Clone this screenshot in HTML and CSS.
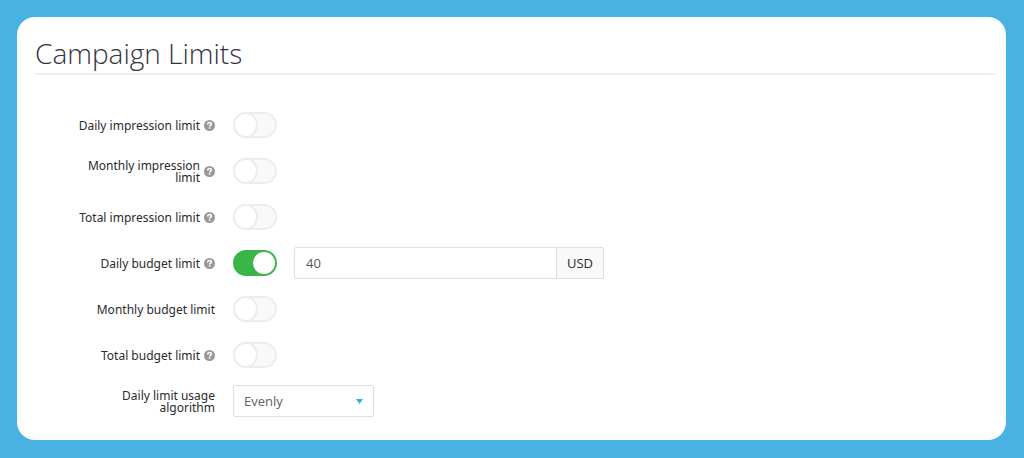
FILE: index.html
```html
<!DOCTYPE html>
<html lang="en">
<head>
  <meta charset="UTF-8" />
  <meta name="viewport" content="width=device-width, initial-scale=1.0"/>
  <title>Campaign Limits</title>
  <link rel="stylesheet" href="styles.css">
</head>
<body>
  <svg class="sprite" aria-hidden="true">
    <symbol id="help" viewBox="0 0 12 12">
      <circle cx="6" cy="6" r="6" fill="#98989b"/>
      <path d="M4 4.8C4 3.4 4.8 2.8 6 2.8s2 .7 2 1.7C8 5.7 6.1 5.7 6.1 7.2" fill="none" stroke="#fff" stroke-width="1.7"/>
      <rect x="5.2" y="7.9" width="1.8" height="1.6" fill="#fff"/>
    </symbol>
  </svg>

  <main class="card">
    <h1>Campaign Limits</h1>

    <form id="limitsForm">
      <div class="row">
        <label for="dailyImpression"><span>Daily impression limit</span><svg class="help"><use href="#help"/></svg></label>
        <input type="checkbox" class="toggle" id="dailyImpression">
      </div>

      <div class="row">
        <label for="monthlyImpression"><span>Monthly impression limit</span><svg class="help"><use href="#help"/></svg></label>
        <input type="checkbox" class="toggle" id="monthlyImpression">
      </div>

      <div class="row">
        <label for="totalImpression"><span>Total impression limit</span><svg class="help"><use href="#help"/></svg></label>
        <input type="checkbox" class="toggle" id="totalImpression">
      </div>

      <div class="row">
        <label for="dailyBudget"><span>Daily budget limit</span><svg class="help"><use href="#help"/></svg></label>
        <input type="checkbox" class="toggle" id="dailyBudget" checked>
        <div class="amount">
          <input type="text" id="dailyBudgetAmount" value="40" aria-label="Daily budget amount">
          <span class="currency">USD</span>
        </div>
      </div>

      <div class="row">
        <label for="monthlyBudget"><span>Monthly budget limit</span></label>
        <input type="checkbox" class="toggle" id="monthlyBudget">
      </div>

      <div class="row">
        <label for="totalBudget"><span>Total budget limit</span><svg class="help"><use href="#help"/></svg></label>
        <input type="checkbox" class="toggle" id="totalBudget">
      </div>

      <div class="row">
        <label for="algorithm"><span>Daily limit usage algorithm</span></label>
        <select id="algorithm">
          <option>Evenly</option>
        </select>
      </div>
    </form>
  </main>
</body>
</html>
```

FILE: styles.css
```css
* {
  box-sizing: border-box;
}

body {
  font-family: "Open Sans", "Noto Sans", sans-serif;
  font-size: 13px;
  background: #48b2e2;
  color: #2b2b2e;
  margin: 0;
  padding: 17px 18px 18px 17px;
}

.sprite {
  display: none;
}

.card {
  background: #fff;
  border-radius: 18px;
  padding: 17px 10px 16px 18px;
}

h1 {
  margin: 0 0 27px;
  padding-bottom: 1px;
  border-bottom: 2px solid #efefef;
  font-size: 28px;
  font-weight: 300;
  line-height: 38px;
  color: #33333f;
}

.row {
  display: flex;
  align-items: center;
  min-height: 46px;
}

.row label {
  display: flex;
  align-items: center;
  justify-content: flex-end;
  gap: 4px;
  flex: none;
  width: 180px;
  margin-right: 18px;
  padding-left: 36px;
  font-family: "Noto Sans", "Open Sans", sans-serif;
  font-size: 12px;
  line-height: 12px;
  text-align: right;
}

.row label span {
  padding-top: 2px;
}

.help {
  flex: none;
  width: 11px;
  height: 11px;
}

.toggle {
  appearance: none;
  display: flex;
  align-items: center;
  flex: none;
  width: 44px;
  height: 26px;
  margin: 0;
  border: 2px solid #ededed;
  border-radius: 13px;
  background: #f9f9f9;
  cursor: pointer;
}

.toggle::before {
  content: "";
  width: 21px;
  height: 22px;
  border-radius: 50%;
  background: #fff;
  box-shadow: 0 0 0 2px #ededed;
}

.toggle:checked {
  justify-content: flex-end;
  background: #3bb54a;
  border-color: #3bb54a;
}

.toggle:checked::before {
  width: 22px;
  box-shadow: none;
}

.amount {
  display: flex;
  width: 310px;
  height: 32px;
  margin-left: 17px;
  border: 1px solid #dfdfe3;
  border-radius: 2px;
}

.amount input {
  flex: 1;
  min-width: 0;
  padding: 0 11px;
  border: none;
  background: none;
  font: inherit;
  color: #55555c;
}

.currency {
  display: flex;
  align-items: center;
  padding: 0 10px;
  border-left: 1px solid #dfdfe3;
  background: #f9f9f9;
}

select {
  appearance: none;
  width: 141px;
  height: 32px;
  padding: 0 10px;
  border: 1px solid #dfdfe3;
  border-radius: 2px;
  background: #fff url("data:image/svg+xml,%3Csvg xmlns='http://www.w3.org/2000/svg' viewBox='0 0 7 5'%3E%3Cpath d='M0 0h7L3.5 5z' fill='%2334ade3'/%3E%3C/svg%3E") no-repeat right 10px center / 7px 5px;
  font: inherit;
  color: #606066;
}
```
